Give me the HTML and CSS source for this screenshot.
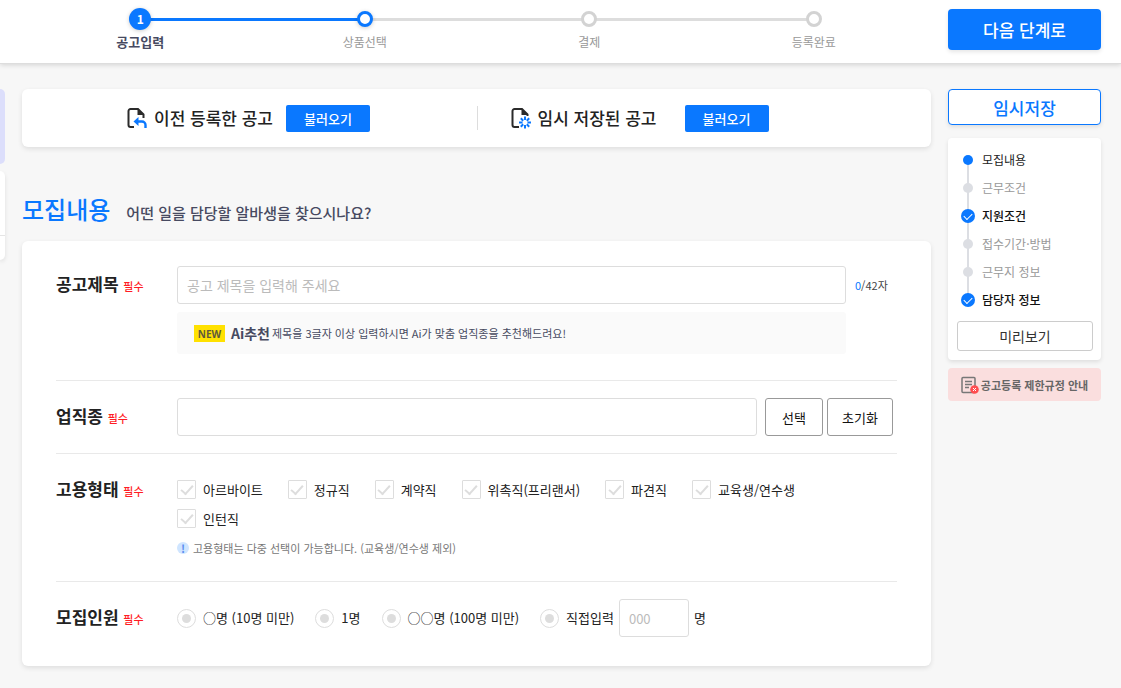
FILE: index.html
```html
<!DOCTYPE html>
<html lang="ko">
<head>
    <meta charset="UTF-8">
    <meta name="viewport" content="width=device-width, initial-scale=1.0">
    <title>공고등록</title>
    <link rel="stylesheet" href="styles.css">
</head>
<body>
    <header class="header">
        <ol class="steps">
            <li class="step current"><span class="step-dot">1</span><span class="step-name">공고입력</span></li>
            <li class="step next"><span class="step-dot"></span><span class="step-name">상품선택</span></li>
            <li class="step"><span class="step-dot"></span><span class="step-name">결제</span></li>
            <li class="step"><span class="step-dot"></span><span class="step-name">등록완료</span></li>
        </ol>
        <button type="button" class="btn-next">다음 단계로</button>
    </header>

    <div class="page">
        <div class="left-banner">
            <div class="banner-top"></div>
            <div class="banner-bottom"></div>
        </div>

        <main class="main">
            <section class="card load-box">
                <div class="load-item">
                    <svg class="doc-icon" viewBox="0 0 20 22" aria-hidden="true">
                        <path d="M7 20H3.5a2 2 0 0 1-2-2V4a2 2 0 0 1 2-2H11l5.500 5.500V11" fill="none" stroke="#2b2b2b" stroke-width="2"/>
                        <path d="M10.500 1.500V8h6.500z" fill="#2b2b2b"/>
                        <path d="M8.500 14.500H15a3.500 3.500 0 0 1 3.500 3.500v3" fill="none" stroke="#0a78ff" stroke-width="2.400"/>
                        <path d="M11.500 10v9L6.500 14.500z" fill="#0a78ff"/>
                    </svg>
                    <strong class="load-title">이전 등록한 공고</strong>
                    <button type="button" class="btn-load">불러오기</button>
                </div>
                <div class="load-item second">
                    <svg class="doc-icon" viewBox="0 0 20 22" aria-hidden="true">
                        <path d="M8 20H3.500a2 2 0 0 1-2-2V4a2 2 0 0 1 2-2H11l5.500 5.500V9" fill="none" stroke="#2b2b2b" stroke-width="2"/>
                        <path d="M10.500 1.500V8h6.500z" fill="#2b2b2b"/>
                        <path d="M14 9.500v3.500M14 18v3.500M8 15.500h3.500M16.500 15.500H20M9.800 11.300l2.400 2.400M15.800 17.300l2.400 2.400M18.200 11.300l-2.400 2.400M12.200 17.300l-2.400 2.400" stroke="#0a78ff" stroke-width="2"/>
                    </svg>
                    <strong class="load-title">임시 저장된 공고</strong>
                    <button type="button" class="btn-load wide">불러오기</button>
                </div>
            </section>

            <div class="title-row">
                <h1>모집내용</h1>
                <p>어떤 일을 담당할 알바생을 찾으시나요?</p>
            </div>

            <form class="card form">
                <div class="row row-title">
                    <label class="row-label" for="title">공고제목 <em>필수</em></label>
                    <div class="title-field">
                        <input type="text" id="title" class="text-input" placeholder="공고 제목을 입력해 주세요">
                        <span class="counter"><b>0</b>/42자</span>
                        <p class="ai-tip"><span class="new">NEW</span><strong>Ai추천</strong>제목을 3글자 이상 입력하시면 Ai가 맞춤 업직종을 추천해드려요!</p>
                    </div>
                </div>

                <div class="row">
                    <label class="row-label" for="job">업직종 <em>필수</em></label>
                    <div class="job-field">
                        <input type="text" id="job" class="text-input">
                        <button type="button" class="btn-line">선택</button>
                        <button type="button" class="btn-line reset">초기화</button>
                    </div>
                </div>

                <div class="row row-type" role="group" aria-labelledby="type-label">
                    <span class="row-label" id="type-label">고용형태 <em>필수</em></span>
                    <div class="row-body">
                        <div class="checks">
                            <label><input type="checkbox" name="type">아르바이트</label>
                            <label><input type="checkbox" name="type">정규직</label>
                            <label><input type="checkbox" name="type">계약직</label>
                            <label><input type="checkbox" name="type">위촉직(프리랜서)</label>
                            <label><input type="checkbox" name="type">파견직</label>
                            <label><input type="checkbox" name="type">교육생/연수생</label>
                            <label><input type="checkbox" name="type">인턴직</label>
                        </div>
                        <p class="hint"><span class="hint-icon">!</span>고용형태는 다중 선택이 가능합니다. (교육생/연수생 제외)</p>
                    </div>
                </div>

                <div class="row row-count" role="group" aria-labelledby="count-label">
                    <span class="row-label" id="count-label">모집인원 <em>필수</em></span>
                    <div class="radios">
                        <label><input type="radio" name="count">○명 (10명 미만)</label>
                        <label><input type="radio" name="count">1명</label>
                        <label><input type="radio" name="count">○○명 (100명 미만)</label>
                        <div class="direct">
                            <label><input type="radio" name="count">직접입력</label>
                            <input type="text" id="people" class="text-input people" placeholder="000">
                            <label for="people">명</label>
                        </div>
                    </div>
                </div>
            </form>
        </main>

        <aside class="side">
            <button type="button" class="btn-save">임시저장</button>
            <nav class="side-nav">
                <ul>
                    <li class="on"><a href="#"><i class="dot"></i>모집내용</a></li>
                    <li><a href="#"><i class="dot"></i>근무조건</a></li>
                    <li class="done"><a href="#"><i class="dot"></i>지원조건</a></li>
                    <li><a href="#"><i class="dot"></i>접수기간·방법</a></li>
                    <li><a href="#"><i class="dot"></i>근무지 정보</a></li>
                    <li class="done"><a href="#"><i class="dot"></i>담당자 정보</a></li>
                </ul>
                <button type="button" class="btn-preview">미리보기</button>
            </nav>
            <a href="#" class="rule-link">
                <svg viewBox="0 0 18 18" aria-hidden="true">
                    <rect x="1" y="1.500" width="13" height="15" rx="1" fill="none" stroke="#777" stroke-width="1.500"/>
                    <path d="M4 5.500h7M4 8.500h7M4 11.500h4" stroke="#777" stroke-width="1.300"/>
                    <circle cx="13.500" cy="13.500" r="4.300" fill="#ff4d50"/>
                    <path d="M12 12l3 3M15 12l-3 3" stroke="#fff"/>
                </svg>
                공고등록 제한규정 안내
            </a>
        </aside>
    </div>
</body>
</html>
```
FILE: styles.css
```css
* {
    box-sizing: border-box;
}

body {
    margin: 0;
    background: #f7f7f7;
    color: #222;
    font-family: "Noto Sans CJK KR", sans-serif;
    font-size: 13px;
    line-height: 20px;
}

h1, p, ol, ul {
    margin: 0;
    padding: 0;
}

ol, ul {
    list-style: none;
}

button, input {
    margin: 0;
    padding: 0;
    font-family: inherit;
    font-size: 13px;
}

button {
    cursor: pointer;
}

a {
    color: inherit;
    text-decoration: none;
}

/* header */
.header {
    display: grid;
    grid-template-columns: 1fr 153px;
    gap: 17px;
    height: 64px;
    padding: 0 20px 0 22px;
    background: #fff;
    border-bottom: 1px solid #ddd;
    box-shadow: 0 1px 5px rgba(0, 0, 0, 0.15);
}

.steps {
    display: grid;
    grid-template-columns: repeat(4, 1fr);
    padding: 8px 5px 0 6px;
}

.step {
    position: relative;
    display: flex;
    flex-direction: column;
    align-items: center;
    color: #999;
    font-size: 12px;
}

.step-dot {
    position: relative;
    width: 16px;
    height: 16px;
    margin: 3px 0;
    border: 3px solid #d3d3d3;
    border-radius: 50%;
    background: #fff;
}

.step-name {
    margin-top: 2px;
}

.step:not(:last-child)::before {
    content: "";
    position: absolute;
    top: 10px;
    left: 50%;
    width: 100%;
    height: 3px;
    background: #ddd;
}

.step.current::before {
    background: #0a78ff;
}

.step.current .step-dot {
    width: 22px;
    height: 22px;
    margin: 0;
    border: 0;
    background: #0a78ff;
    color: #fff;
    font-weight: bold;
    line-height: 22px;
    text-align: center;
    box-shadow: 0 1px 4px rgba(0, 0, 0, 0.2);
}

.step.next .step-dot {
    border-color: #0a78ff;
    box-shadow: 0 1px 4px rgba(0, 0, 0, 0.2);
}

.step.current .step-name {
    color: #474a61;
    font-size: 13px;
    font-weight: bold;
}

.btn-next {
    height: 41px;
    margin-top: 9px;
    border: 0;
    border-radius: 4px;
    background: #0a78ff;
    color: #fff;
    font-size: 17px;
    font-weight: 500;
    box-shadow: 0 2px 4px rgba(0, 0, 0, 0.1);
}

/* layout */
.page {
    display: grid;
    grid-template-columns: 5px 1fr 153px;
    gap: 17px;
    align-items: start;
    padding: 25px 20px 22px 0;
}

.banner-top {
    height: 75px;
    margin-bottom: 7px;
    border-radius: 0 5px 5px 0;
    background: #dcdefb;
}

.banner-bottom {
    height: 89px;
    border-radius: 0 5px 5px 0;
    background: linear-gradient(#e5e5e5, #e5e5e5) 0 64px / 100% 1px no-repeat #fff;
    box-shadow: 0 2px 4px rgba(0, 0, 0, 0.1);
}

.card {
    border-radius: 6px;
    background: #fff;
    box-shadow: 0 2px 5px rgba(0, 0, 0, 0.1);
}

/* load box */
.load-box {
    display: grid;
    grid-template-columns: 1fr 1fr;
    align-items: center;
    height: 58px;
}

.load-item {
    display: flex;
    align-items: center;
    height: 24px;
    padding-left: 105px;
}

.load-item.second {
    padding-left: 33px;
    border-left: 1px solid #ddd;
}

.doc-icon {
    width: 20px;
    height: 22px;
    margin-right: 7px;
}

.load-title {
    font-size: 17px;
    font-weight: 500;
}

.btn-load {
    width: 84px;
    height: 27px;
    margin-left: 13px;
    border: 0;
    border-radius: 2px;
    background: #0a78ff;
    color: #fff;
    font-weight: 500;
}

.btn-load.wide {
    margin-left: 28px;
}

/* title */
.title-row {
    display: flex;
    align-items: baseline;
    gap: 16px;
    padding: 44px 0 14px;
}

.title-row h1 {
    color: #0a78ff;
    font-size: 24px;
    font-weight: 500;
    line-height: 36px;
}

.title-row p {
    color: #474a61;
    font-size: 15px;
    font-weight: 500;
}

/* form */
.form {
    padding: 0 34px;
}

.row {
    display: grid;
    grid-template-columns: 121px 1fr;
    padding: 17px 0;
    border-bottom: 1px solid #e9e9e9;
}

.row-title {
    padding: 25px 0 26px;
}

.row-type {
    padding: 26px 0 23px;
}

.row-count {
    padding-bottom: 29px;
    border-bottom: 0;
}

.row-label {
    height: 38px;
    font-size: 17px;
    font-weight: bold;
    line-height: 36px;
    white-space: nowrap;
}

.row-type .row-label {
    height: 19px;
    line-height: 17px;
}

.row-label em {
    color: #ff1c24;
    font-size: 11px;
    font-style: normal;
    font-weight: 500;
}

.text-input {
    width: 100%;
    min-width: 0;
    height: 38px;
    padding: 0 9px;
    border: 1px solid #ddd;
    border-radius: 3px;
    background: #fff;
    font-size: 14px;
}

.text-input::placeholder {
    color: #bbb;
}

.title-field {
    display: grid;
    grid-template-columns: 1fr 42px;
    gap: 8px 9px;
}

.counter {
    color: #444;
    font-size: 11px;
    line-height: 38px;
}

.counter b {
    color: #0a78ff;
    font-weight: 400;
}

.ai-tip {
    display: flex;
    align-items: center;
    height: 42px;
    padding-left: 17px;
    border-radius: 3px;
    background: #fafafa;
    color: #474a61;
    font-size: 11px;
    white-space: nowrap;
}

.ai-tip .new {
    width: 31px;
    height: 17px;
    background: #ffe100;
    color: #5f5a3c;
    font-family: "Open Sans", sans-serif;
    font-size: 10px;
    font-weight: bold;
    line-height: 18px;
    text-align: center;
}

.ai-tip strong {
    margin: 0 2px 0 6px;
    font-size: 14px;
}

.job-field {
    display: flex;
    gap: 4px;
    padding-right: 4px;
}

.job-field .text-input {
    flex: 1;
    margin-right: 4px;
}

.btn-line {
    width: 58px;
    height: 38px;
    border: 1px solid #999;
    border-radius: 3px;
    background: #fff;
    color: #111;
}

.btn-line.reset {
    width: 66px;
}

.checks {
    display: flex;
    flex-wrap: wrap;
    gap: 10px 25px;
    padding-right: 34px;
}

.checks label, .radios label {
    display: flex;
    align-items: center;
    gap: 7px;
    height: 19px;
    white-space: nowrap;
}

input[type="checkbox"], input[type="radio"] {
    appearance: none;
    display: grid;
    place-content: center;
    width: 19px;
    height: 19px;
    border: 1px solid #ddd;
    border-radius: 1px;
    background: #fff;
}

input[type="radio"] {
    border-radius: 50%;
}

input[type="checkbox"]::before {
    content: "";
    width: 10px;
    height: 5px;
    margin-bottom: 3px;
    border: solid #ddd;
    border-width: 0 0 2px 2px;
    transform: rotate(-48deg);
}

input[type="radio"]::before {
    content: "";
    width: 9px;
    height: 9px;
    border-radius: 50%;
    background: #ddd;
}

input[type="checkbox"]:checked::before {
    border-color: #0a78ff;
}

input[type="radio"]:checked::before {
    background: #0a78ff;
}

.hint {
    display: flex;
    align-items: center;
    gap: 4px;
    margin-top: 10px;
    color: #777;
    font-size: 11px;
}

.hint-icon {
    width: 12px;
    height: 12px;
    border-radius: 50%;
    background: #cfe5ff;
    color: #5a8cf0;
    font-weight: bold;
    line-height: 12px;
    text-align: center;
}

.radios {
    display: flex;
    align-items: center;
    gap: 21px;
}

.direct {
    display: flex;
    align-items: center;
    gap: 5px;
}

.people {
    width: 70px;
    font-size: 13px;
}

/* right side */
.btn-save {
    width: 100%;
    height: 36px;
    border: 1px solid #0a78ff;
    border-radius: 4px;
    background: #fff;
    color: #0a78ff;
    font-size: 17px;
    font-weight: 500;
    box-shadow: 0 2px 4px rgba(0, 0, 0, 0.1);
}

.side-nav {
    margin: 13px 0 8px;
    padding: 8px 8px 9px 9px;
    border-radius: 4px;
    background: #fff;
    box-shadow: 0 2px 4px rgba(0, 0, 0, 0.1);
}

.side-nav li {
    position: relative;
    color: #999;
    font-size: 12px;
}

.side-nav li:not(:last-child)::before {
    content: "";
    position: absolute;
    top: 14px;
    left: 10px;
    width: 2px;
    height: 28px;
    background: #dcdee3;
}

.side-nav a {
    display: flex;
    align-items: center;
    gap: 7px;
    height: 28px;
    padding-left: 4px;
}

.side-nav .on {
    color: #222;
}

.side-nav .done {
    color: #111;
    font-weight: 500;
}

.dot {
    position: relative;
    display: grid;
    place-content: center;
    width: 10px;
    height: 10px;
    margin: 0 2px;
    border-radius: 50%;
    background: #dcdee3;
}

.on .dot {
    background: #0a78ff;
}

.done .dot {
    width: 14px;
    height: 14px;
    margin: 0;
    background: #0a78ff;
}

.done .dot::before {
    content: "";
    width: 7px;
    height: 4px;
    margin-bottom: 2px;
    border: solid #fff;
    border-width: 0 0 1px 1px;
    transform: rotate(-45deg);
}

.btn-preview {
    width: 100%;
    height: 30px;
    margin-top: 7px;
    border: 1px solid #ccc;
    border-radius: 3px;
    background: #fff;
    color: #333;
    font-size: 14px;
}

.rule-link {
    display: flex;
    align-items: center;
    justify-content: center;
    gap: 2px;
    height: 33px;
    border-radius: 4px;
    background: #fadede;
    color: #666;
    font-size: 11px;
    font-weight: bold;
    white-space: nowrap;
}

.rule-link svg {
    width: 18px;
    height: 18px;
}
```
